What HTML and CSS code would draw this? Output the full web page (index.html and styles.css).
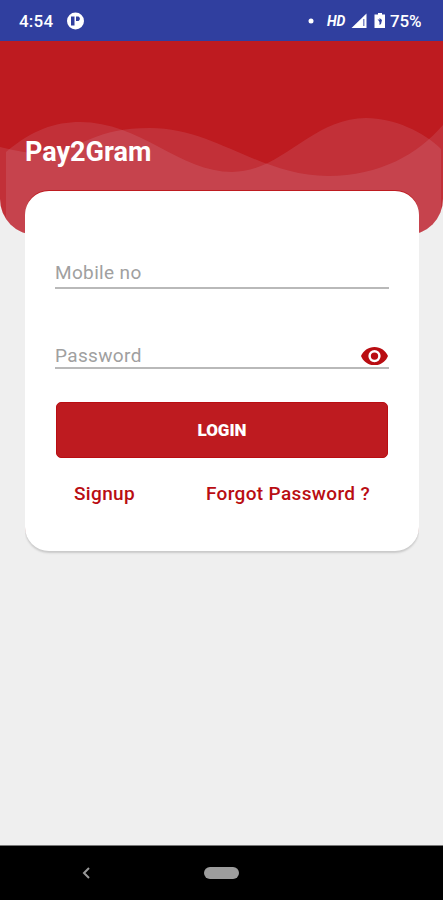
FILE: index.html
```html
<!DOCTYPE html>
<html lang="en">
<head>
<meta charset="utf-8">
<meta name="viewport" content="width=device-width, initial-scale=1">
<title>Pay2Gram</title>
<link rel="stylesheet" href="styles.css">
</head>
<body>
<div class="screen">
  <div class="status">
    <svg class="status-icons" viewBox="0 0 443 41" aria-hidden="true">
      <circle cx="75.500" cy="21" r="8.500" fill="#fff"/>
      <path d="M71 16.500h3.500v9h-3.500zM76 16.500h2.500a2.500 2.500 0 0 1 0 4.500h-2.500z" fill="#303f9f"/>
      <circle cx="311" cy="21" r="2.500" fill="#fff"/>
      <path d="M366.500 13.500v14.500h-15z" fill="#fff"/>
      <path d="M363 19h1.500v7h-1.500z" fill="#7f89c6"/>
      <path d="M378 13h4v1.500h3v13.500h-10.500v-13.500h3.500z" fill="#fff"/>
      <path d="M377.500 19l2 1v-2l2.500 2-1 4-1.500 1v-3z" fill="#303f9f"/>
    </svg>
    <span class="time">4:54</span>
    <span class="hd">HD</span>
    <span class="level">75%</span>
  </div>
  <main class="content">
    <header class="hero">
      <svg class="waves" viewBox="0 41 443 194" aria-hidden="true">
        <path d="M6 152C32 130 55 122 80 122C140 122 180 172 232 172C282 172 312 118 366 118C394 118 424 132 441 149V235H6Z"/>
        <path d="M0 147C20 152 38 155 55 152C82 147 96 128 150 128C215 128 260 176 328 176C380 176 418 154 443 125V235H0Z"/>
      </svg>
      <h1 class="brand">Pay2Gram</h1>
    </header>
    <form class="card">
      <label class="field mobile"><span>Mobile no</span></label>
      <label class="field password"><span>Password</span>
        <svg class="eye" viewBox="1 4 22 15" aria-hidden="true"><path d="M12 4.500C7 4.500 2.730 7.610 1 12c1.730 4.390 6 7.500 11 7.500s9.270-3.110 11-7.500c-1.730-4.390-6-7.500-11-7.500zM12 17a5 5 0 1 1 0-10 5 5 0 0 1 0 10zm0-8a3 3 0 1 0 0 6 3 3 0 0 0 0-6z"/></svg>
      </label>
      <button class="login" type="button">LOGIN</button>
      <div class="links"><a>Signup</a><a>Forgot Password ?</a></div>
    </form>
  </main>
  <nav class="navbar">
    <svg class="back" viewBox="0 0 8 12" aria-hidden="true"><path d="M7 1L2 6l5 5"/></svg>
    <span class="home"></span>
  </nav>
</div>
</body>
</html>
```
FILE: styles.css
```css
* { box-sizing: border-box; }
body { margin: 0; font-family: Roboto, sans-serif; }
.screen { width: 443px; height: 900px; display: flex; flex-direction: column; background: #efefef; overflow: hidden; }
.status { position: relative; height: 41px; flex: none; display: flex; align-items: center; padding: 1px 20px 0 19px; background: #303f9f; color: #fff; font-weight: 500; font-size: 17px; }
.status-icons { position: absolute; inset: 0; width: 443px; height: 41px; }
.time { width: 308px; letter-spacing: .2px; }
.hd { width: 63px; font-size: 14px; font-style: italic; font-weight: 700; margin-top: -1px; }
.level { letter-spacing: -.1px; }
.content { flex: 1; }
.hero { position: relative; height: 194px; padding: 95px 25px 0; background: #be1b20; border-radius: 0 0 36px 36px; overflow: hidden; }
.waves { position: absolute; top: 0; left: 0; width: 443px; height: 194px; fill: #e4e0f2; fill-opacity: .115; }
.brand { position: relative; margin: 0; color: #fff; font-size: 27px; line-height: 32px; font-weight: 700; }
.card { position: relative; width: 394px; height: 360px; margin: -44px 0 0 25px; padding: 59px 30px 0; background: #fff; border-radius: 24px; box-shadow: 0 2px 2px #c9c9c9, 0 -1px 0 #be1b20; clip-path: inset(-2px 0 -5px); }
.field { display: flex; align-items: center; justify-content: space-between; height: 39px; border-bottom: 2px solid #b9b9b9; color: #a0a0a0; font-size: 19px; letter-spacing: .35px; }
.mobile { padding-top: 7px; }
.password { margin-top: 41px; padding-top: 14px; }
.eye { width: 27px; height: 19px; margin-right: 1px; fill: #b90d12; }
.login { display: block; width: 332px; height: 56px; margin: 33px 1px 0; padding: 0; border: 1px solid #b90d12; border-radius: 5px; background: #be1b20; color: #fff; font: 900 17px Roboto, sans-serif; }
.links { display: flex; justify-content: space-between; padding: 24px 19px 0; color: #b90d12; font-size: 19px; line-height: 24px; font-weight: 500; letter-spacing: .35px; }
.navbar { display: flex; align-items: center; height: 55px; flex: none; padding-left: 82px; border-top: 1px solid #777; background: #000; }
.back { width: 8px; height: 12px; fill: none; stroke: #999; stroke-width: 2; }
.home { width: 35px; height: 12px; margin-left: 114px; border-radius: 6px; background: #9d9d9d; }
```
